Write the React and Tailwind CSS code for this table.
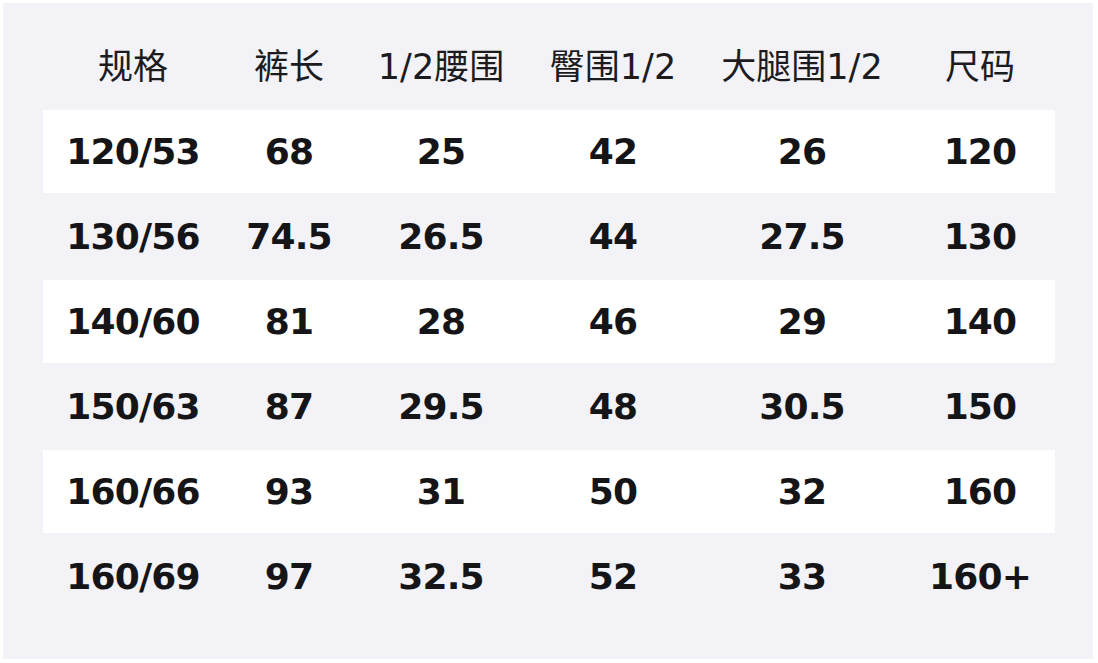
const head = ['规格', '裤长', '1/2腰围', '臀围1/2', '大腿围1/2', '尺码']

const rows = [
  ['120/53', '68', '25', '42', '26', '120'],
  ['130/56', '74.5', '26.5', '44', '27.5', '130'],
  ['140/60', '81', '28', '46', '29', '140'],
  ['150/63', '87', '29.5', '48', '30.5', '150'],
  ['160/66', '93', '31', '50', '32', '160'],
  ['160/69', '97', '32.5', '52', '33', '160+'],
]

const cols = 'grid grid-cols-[180px_132px_172px_172px_206px_150px]'

export default function App() {
  return (
    <div className="w-[1098px] h-[663px] bg-white p-[3px]">
      <div className="w-[1090px] h-[656px] bg-[#f2f2f7] pl-[40px] pt-[22px]">
        {/* header */}
        <div className={`${cols} h-[85px] text-[35px] text-[#1c1c1f] font-['DejaVu_Sans','Noto_Sans_CJK_SC',sans-serif]`}>
          {head.map(h => (
            <div key={h} className="flex items-center justify-center whitespace-nowrap">{h}</div>
          ))}
        </div>
        {/* data rows, white bands on odd rows */}
        {rows.map((r, i) => (
          <div
            key={r[0] + i}
            className={`${cols} text-[36px] tracking-[-0.8px] font-bold text-[#151518] font-['DejaVu_Sans',sans-serif] ${i % 2 === 0 ? 'bg-white h-[83px]' : 'h-[87px]'} w-[1012px]`}
          >
            {r.map((c, j) => (
              <div key={j} className="flex items-center justify-center whitespace-nowrap pt-[1px]">{c}</div>
            ))}
          </div>
        ))}
      </div>
    </div>
  )
}
